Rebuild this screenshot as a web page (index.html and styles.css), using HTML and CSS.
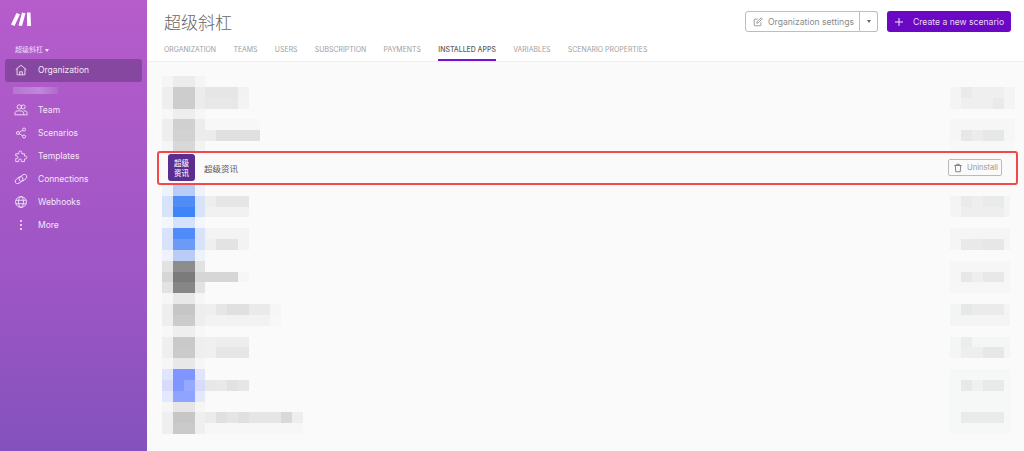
FILE: index.html
```html
<!DOCTYPE html>
<html lang="zh-CN">
<head>
<meta charset="utf-8">
<title>超级斜杠</title>
<link rel="stylesheet" href="styles.css">
</head>
<body>
<div class="app">
  <aside class="sidebar">
    <svg class="logo" viewBox="0 0 20 14"><path d="M0 12.500 5.500 1 9 2.200 3.500 14z M7.500 13.500 11 .5l3.500.7L11 14z M16 .5h3.500L20 14h-4z" fill="#fff"/></svg>
    <div class="org-label">超级斜杠 <span class="caret"></span></div>
    <nav class="nav">
      <a class="nav-item active"><svg class="nav-icon" viewBox="0 0 16 16"><path d="M2 7.500 8 2.500l6 5M3.500 6.500v7h9v-7M6.500 13.500v-3.500h3v3.500"/></svg><span>Organization</span></a>
      <div class="nav-blur"></div>
      <a class="nav-item"><svg class="nav-icon" viewBox="0 0 16 16"><circle cx="6" cy="4.500" r="2.500"/><circle cx="10.500" cy="4.500" r="2.300"/><path d="M1 13.500c0-1.500 0-4.500 3-4.500h4c3 0 3 3 3 4.500zM11 9h1.500c2.500 0 2.500 2.500 2.500 4.500h-4"/></svg><span>Team</span></a>
      <a class="nav-item"><svg class="nav-icon" viewBox="0 0 16 16"><circle cx="4.500" cy="8" r="1.700"/><circle cx="11.500" cy="4" r="1.700"/><circle cx="11.500" cy="12" r="1.700"/><path d="M6 7.200 10 4.800M6 8.800l4 2.400"/></svg><span>Scenarios</span></a>
      <a class="nav-item"><svg class="nav-icon" viewBox="0 0 16 16"><path d="M2 5.500h3.500V4a1.700 1.700 0 0 1 3.400 0v1.500h3V8h1a1.700 1.700 0 0 1 0 3.400h-1v3H8.500v-1.500a1.500 1.500 0 0 0-3 0v1.500H2v-3.400h1a1.500 1.500 0 0 0 0-3H2z"/></svg><span>Templates</span></a>
      <a class="nav-item"><svg class="nav-icon wide" viewBox="0 0 16 16"><ellipse class="link-a" cx="5.800" cy="9.300" rx="5" ry="3"/><ellipse class="link-b" cx="10.200" cy="6.700" rx="5" ry="3"/></svg><span>Connections</span></a>
      <a class="nav-item"><svg class="nav-icon" viewBox="0 0 16 16"><circle cx="8" cy="8" r="6.200"/><ellipse cx="8" cy="8" rx="2.800" ry="6.200"/><path d="M2 6h12M2 10h12"/></svg><span>Webhooks</span></a>
      <a class="nav-item"><svg class="nav-icon" viewBox="0 0 16 16"><circle class="dot" cx="8" cy="3.500" r="1.200"/><circle class="dot" cx="8" cy="8" r="1.200"/><circle class="dot" cx="8" cy="12.500" r="1.200"/></svg><span>More</span></a>
    </nav>
  </aside>
  <main class="main">
    <header class="header">
      <div class="header-top">
        <h1 class="title">超级斜杠</h1>
        <div class="actions">
          <div class="split">
            <button class="btn-settings"><svg class="btn-icon" viewBox="0 0 12 12"><path d="M9.500 6.500v3a1 1 0 0 1-1 1h-6a1 1 0 0 1-1-1v-6a1 1 0 0 1 1-1h3M4.500 7.500l.4-2L10 .9l1.200 1.200L6.400 7z"/></svg>Organization settings</button>
            <button class="btn-caret"><span class="caret dark"></span></button>
          </div>
          <button class="btn-primary"><svg class="plus" viewBox="0 0 8 8"><path d="M4 0v8M0 4h8"/></svg>Create a new scenario</button>
        </div>
      </div>
      <nav class="tabs">
        <a class="tab">Organization</a>
        <a class="tab">Teams</a>
        <a class="tab">Users</a>
        <a class="tab">Subscription</a>
        <a class="tab">Payments</a>
        <a class="tab active">Installed apps</a>
        <a class="tab">Variables</a>
        <a class="tab">Scenario properties</a>
      </nav>
    </header>
    <section class="content">
      <div class="mosaic-row top">
        <svg class="mosaic-left top-h" viewBox="0 0 13 7" shape-rendering="crispEdges">
          <rect y="0" width="1" height="1" fill="#f5f5f5"/><rect x="1" y="0" width="2" height="1" fill="#ececec"/><rect x="3" y="0" width="1" height="1" fill="#f5f5f5"/>
          <rect y="1" width="1" height="1" fill="#eee"/><rect x="1" y="1" width="2" height="2" fill="#cdcdcd"/><rect x="3" y="1" width="1" height="2" fill="#ececec"/><rect y="2" width="1" height="1" fill="#eee"/>
          <rect x="4" y="1" width="3" height="1" fill="#e6e6e6"/><rect x="7" y="1" width="1" height="1" fill="#f2f2f2"/><rect x="4" y="2" width="3" height="1" fill="#e8e8e8"/><rect x="7" y="2" width="1" height="1" fill="#f3f3f3"/>
          <rect y="3" width="1" height="1" fill="#f7f7f7"/><rect x="1" y="3" width="2" height="1" fill="#eee"/><rect x="3" y="3" width="1" height="1" fill="#f6f6f6"/>
          <rect y="4" width="1" height="2" fill="#eee"/><rect x="1" y="4" width="2" height="1" fill="#d0d0d0"/><rect x="3" y="4" width="1" height="2" fill="#ececec"/><rect x="4" y="4" width="5" height="1" fill="#f7f7f7"/>
          <rect x="1" y="5" width="2" height="1" fill="#d2d2d2"/><rect x="4" y="5" width="1" height="1" fill="#ececec"/><rect x="5" y="5" width="4" height="1" fill="#e0e0e0"/>
          <rect y="6" width="1" height="1" fill="#f5f5f5"/><rect x="1" y="6" width="2" height="1" fill="#d8d8d8"/><rect x="3" y="6" width="1" height="1" fill="#f3f3f3"/>
        </svg>
        <svg class="mosaic-right top-h" viewBox="0 0 6 7" shape-rendering="crispEdges">
          <rect y="1" width="6" height="2" fill="#f4f4f4"/><rect x="1" y="1" width="4" height="2" fill="#efefef"/><rect x="1" y="1" width="1" height="1" fill="#e9eaea"/><rect x="4" y="2" width="1" height="1" fill="#e9eaea"/>
          <rect y="4" width="6" height="2" fill="#f6f6f6"/><rect x="1" y="5" width="4" height="1" fill="#ececec"/><rect x="1" y="5" width="1" height="1" fill="#e6e7e7"/><rect x="3" y="5" width="2" height="1" fill="#e6e7e7"/>
          <rect y="6" width="6" height="1" fill="#f8f8f8"/>
        </svg>
      </div>
      <div class="app-row">
        <div class="app-icon">超级<br>资讯</div>
        <div class="app-name">超级资讯</div>
        <button class="btn-uninstall"><svg class="trash" viewBox="0 0 12 12"><path d="M1.500 3h9M4.500 3V1.500h3V3M2.800 3l.5 7.500h5.400L9.200 3"/></svg>Uninstall</button>
      </div>
      <div class="mosaic-row">
        <svg class="mosaic-left bottom-h" viewBox="0 0 13 23" shape-rendering="crispEdges">
          <rect y="0" width="4" height="1" fill="#eef2fb"/><rect x="1" y="0" width="2" height="1" fill="#b8ccf5"/>
          <rect y="1" width="4" height="2" fill="#d8e2f8"/><rect x="1" y="1" width="2" height="1" fill="#4f8cf7"/><rect x="1" y="2" width="2" height="1" fill="#3f85f7"/>
          <rect x="4" y="1" width="1" height="1" fill="#eee"/><rect x="5" y="1" width="3" height="1" fill="#e6e6e6"/><rect x="4" y="2" width="4" height="1" fill="#f1f1f1"/>
          <rect y="3" width="4" height="1" fill="#f3f6fd"/><rect x="1" y="3" width="2" height="1" fill="#d6e2fb"/>
          <rect y="4" width="4" height="2" fill="#d8e2f8"/><rect x="1" y="4" width="2" height="1" fill="#4f8cf7"/><rect x="1" y="5" width="2" height="1" fill="#6b9bf7"/>
          <rect x="4" y="4" width="4" height="1" fill="#f3f3f3"/><rect x="4" y="5" width="1" height="1" fill="#efefef"/><rect x="5" y="5" width="2" height="1" fill="#e3e3e3"/><rect x="7" y="5" width="1" height="1" fill="#f3f3f3"/>
          <rect y="6" width="4" height="1" fill="#eef2fb"/><rect x="1" y="6" width="2" height="1" fill="#b8ccf5"/>
          <rect y="7" width="4" height="1" fill="#e2e2e2"/><rect x="1" y="7" width="2" height="1" fill="#8d8d8d"/>
          <rect y="8" width="4" height="1" fill="#d6d6d6"/><rect x="1" y="8" width="2" height="1" fill="#7b7b7b"/><rect x="4" y="8" width="3" height="1" fill="#d6d6d6"/><rect x="7" y="8" width="1" height="1" fill="#f6f6f6"/>
          <rect y="9" width="4" height="1" fill="#e3e3e3"/><rect x="1" y="9" width="2" height="1" fill="#868686"/>
          <rect y="10" width="4" height="1" fill="#f6f6f6"/><rect x="1" y="10" width="2" height="1" fill="#e8e8e8"/>
          <rect y="11" width="4" height="2" fill="#eee"/><rect x="1" y="11" width="2" height="1" fill="#c6c6c6"/><rect x="1" y="12" width="2" height="1" fill="#cbcbcb"/>
          <rect x="4" y="11" width="1" height="1" fill="#efefef"/><rect x="5" y="11" width="1" height="1" fill="#e6e6e6"/><rect x="6" y="11" width="2" height="1" fill="#e0e0e0"/><rect x="8" y="11" width="2" height="1" fill="#eaeaea"/><rect x="10" y="11" width="1" height="1" fill="#f6f6f6"/>
          <rect x="4" y="12" width="6" height="1" fill="#f2f2f2"/><rect x="10" y="12" width="1" height="1" fill="#f7f7f7"/>
          <rect y="13" width="4" height="1" fill="#f7f7f7"/><rect x="1" y="13" width="2" height="1" fill="#eee"/>
          <rect y="14" width="4" height="2" fill="#efefef"/><rect x="1" y="14" width="2" height="1" fill="#c9c9c9"/><rect x="1" y="15" width="2" height="1" fill="#cbcbcb"/>
          <rect x="4" y="14" width="1" height="2" fill="#f0f0f0"/><rect x="5" y="14" width="3" height="1" fill="#ededed"/><rect x="5" y="15" width="3" height="1" fill="#e6e6e6"/>
          <rect y="16" width="4" height="1" fill="#f6f6f6"/><rect x="1" y="16" width="2" height="1" fill="#e8e8e8"/>
          <rect y="17" width="4" height="1" fill="#e0e4fc"/><rect x="1" y="17" width="2" height="1" fill="#7f95ff"/>
          <rect y="18" width="4" height="1" fill="#d8dcfa"/><rect x="1" y="18" width="1" height="1" fill="#7f95ff"/><rect x="2" y="18" width="1" height="1" fill="#97a8ff"/>
          <rect x="4" y="18" width="1" height="1" fill="#e8e8e8"/><rect x="5" y="18" width="1" height="1" fill="#e9e9e9"/><rect x="6" y="18" width="1" height="1" fill="#e2e2e2"/><rect x="7" y="18" width="1" height="1" fill="#e6e6e6"/>
          <rect y="19" width="4" height="1" fill="#e4e8fc"/><rect x="1" y="19" width="2" height="1" fill="#8fa4ff"/>
          <rect y="20" width="4" height="1" fill="#f6f6f6"/><rect x="1" y="20" width="2" height="1" fill="#e6e6e6"/>
          <rect y="21" width="4" height="2" fill="#efefef"/><rect x="1" y="21" width="2" height="1" fill="#c6c6c6"/><rect x="1" y="22" width="2" height="1" fill="#cacaca"/>
          <rect x="4" y="21" width="1" height="1" fill="#ebebeb"/><rect x="5" y="21" width="1" height="1" fill="#e0e0e0"/><rect x="6" y="21" width="1" height="1" fill="#e5e5e5"/><rect x="7" y="21" width="1" height="1" fill="#e0e0e0"/><rect x="8" y="21" width="3" height="1" fill="#e6e6e6"/><rect x="11" y="21" width="1" height="1" fill="#d9d9d9"/><rect x="12" y="21" width="1" height="1" fill="#eee"/>
          <rect x="4" y="22" width="9" height="1" fill="#f7f7f7"/>
        </svg>
        <svg class="mosaic-right bottom-h" viewBox="0 0 6 23" shape-rendering="crispEdges">
          <rect y="1" width="5.500" height="2" fill="#f4f4f4"/><rect x="1" y="1" width="4" height="2" fill="#eeeeee"/><rect x="1" y="1" width="1" height="1" fill="#e9eaea"/><rect x="3" y="1" width="2" height="1" fill="#e9eaea"/>
          <rect y="4" width="5.500" height="2" fill="#f5f5f5"/><rect x="1" y="5" width="4" height="1" fill="#e9e9e9"/><rect x="3" y="5" width="2" height="1" fill="#e6e7e7"/>
          <rect y="7" width="5.500" height="3" fill="#f6f6f6"/><rect x="1" y="8" width="1" height="1" fill="#e6e7e7"/><rect x="2" y="8" width="1" height="1" fill="#eeeeee"/><rect x="3" y="8" width="2" height="1" fill="#e8e8e8"/>
          <rect y="11" width="5.500" height="2" fill="#f3f4f4"/><rect x="1" y="11" width="1" height="1" fill="#e6e7e8"/><rect x="2" y="11" width="3" height="1" fill="#ebebec"/>
          <rect y="14" width="5.500" height="2" fill="#f4f5f5"/><rect x="1" y="14" width="1" height="1" fill="#ebecec"/><rect x="1" y="15" width="2" height="1" fill="#eeeeee"/><rect x="3" y="15" width="2" height="1" fill="#e6e7e9"/>
          <rect y="17" width="5.500" height="6" fill="#f6f7f7"/><rect x="1" y="18" width="1" height="1" fill="#e7e8ea"/><rect x="2" y="18" width="1" height="1" fill="#f0f0f0"/><rect x="3" y="18" width="2" height="1" fill="#e9e9e9"/><rect x="1" y="21" width="4" height="1" fill="#e9eaea"/>
        </svg>
      </div>
    </section>
  </main>
</div>
</body>
</html>
```
FILE: styles.css
```css
* { box-sizing: border-box; }
html, body { margin: 0; height: 100%; overflow: hidden; }
body { font-family: Inter, "Noto Sans CJK SC", sans-serif; background: #fafafa; }
button { font-family: inherit; cursor: pointer; }

.app { display: flex; height: 451px; }

.sidebar {
  width: 147px;
  flex: none;
  padding: 12px 5px 0;
  background: linear-gradient(180deg, #b65ccb 0%, #9c55c5 66%, #8352bc 100%);
  color: #f5e6fa;
}
.logo { display: block; width: 20px; height: 14px; margin-left: 6px; }
.org-label {
  margin: 18px 0 0 10px;
  height: 11px;
  line-height: 11px;
  font-size: 7px;
  font-family: "Noto Sans CJK SC", sans-serif;
  color: #f0dff6;
}
.caret {
  display: inline-block;
  vertical-align: middle;
  width: 0;
  height: 0;
  border-left: 2.500px solid transparent;
  border-right: 2.500px solid transparent;
  border-top: 3px solid #f3e6f8;
}
.caret.dark { border-top-color: #666; }

.nav { display: flex; flex-direction: column; margin-top: 4px; }
.nav-item {
  display: flex;
  align-items: center;
  height: 23px;
  padding: 0 0 1px 9px;
  border-radius: 3px;
  font-size: 8.500px;
}
.nav-item.active { background: #8647a0; }
.nav-icon {
  width: 14px;
  height: 14px;
  margin-right: 10px;
  fill: none;
  stroke: #f3e6f8;
  stroke-width: 1;
}
.nav-icon .dot { fill: #f3e6f8; stroke: none; }
.link-a { transform: rotate(-35deg); transform-origin: 5.800px 9.300px; }
.link-b { transform: rotate(-35deg); transform-origin: 10.200px 6.700px; }
.nav-blur {
  height: 7px;
  width: 45px;
  margin: 5px 0 5px 8px;
  background: linear-gradient(90deg, #b478cf, #bf88d8 60%, #ab6cc9);
  filter: blur(.6px);
}

.main { flex: 1; min-width: 0; display: flex; flex-direction: column; }

.header { height: 62px; background: #fff; border-bottom: 1px solid #efefef; padding: 0 13px 0 17px; }
.header-top { display: flex; justify-content: space-between; align-items: flex-start; height: 43px; }
.title {
  margin: 9px 0 0;
  font-family: "Noto Sans CJK SC", sans-serif;
  font-size: 17px;
  line-height: 25px;
  font-weight: 300;
  color: #666;
}
.actions { display: flex; gap: 9px; margin-top: 11px; }
.split { display: flex; height: 21px; }
.btn-settings, .btn-caret {
  height: 21px;
  padding: 0;
  background: #fff;
  border: 1px solid #b9bec2;
  color: #8a8a8a;
  font-size: 8.600px;
  display: flex;
  align-items: center;
}
.btn-settings { width: 115px; padding-left: 7px; border-radius: 3px 0 0 3px; }
.btn-caret { width: 18px; justify-content: center; border-left: 0; border-radius: 0 3px 3px 0; }
.btn-icon { width: 10px; height: 10px; margin-right: 5px; fill: none; stroke: #8a8a8a; stroke-width: 1; }
.btn-primary {
  width: 124px;
  height: 21px;
  padding: 0 0 0 8px;
  border: 0;
  border-radius: 3px;
  background: #6a08c4;
  color: #e9d8f8;
  font-size: 8.600px;
  display: flex;
  align-items: center;
}
.plus { width: 8px; height: 8px; margin-right: 10px; stroke: #f0e6fa; stroke-width: 1; fill: none; }

.tabs { display: flex; gap: 17.300px; height: 18px; }
.tab {
  height: 18px;
  padding-top: 2px;
  line-height: 9px;
  font-size: 6.950px;
  text-transform: uppercase;
  color: #a0a0a0;
  white-space: nowrap;
}
.tab.active { color: #606060; font-weight: 500; border-bottom: 2px solid #7a10d8; }

.content { flex: 1; padding-top: 14px; }
.mosaic-row { display: flex; justify-content: space-between; align-items: flex-start; padding: 0 9px 0 15px; }
.mosaic-row.top { height: 75px; overflow: hidden; }
.mosaic-left, .mosaic-right { display: block; filter: blur(.5px); }
.mosaic-left { width: 141px; }
.mosaic-right { width: 65px; }
.top-h { height: 76px; }
.bottom-h { height: 249px; }

.app-row {
  display: flex;
  align-items: center;
  height: 34px;
  margin: 0 6px 0 10px;
  padding: 0 14px 1px 9px;
  border: 2px solid #f4474a;
  border-radius: 3px;
  background: #fafafa;
}
.app-icon {
  width: 27px;
  height: 27px;
  flex: none;
  border-radius: 3px;
  background: #5a2d91;
  color: #f0e9f7;
  font-family: "Noto Sans CJK SC", serif;
  font-weight: 500;
  font-size: 7.500px;
  line-height: 9.500px;
  text-align: center;
  padding-top: 4px;
}
.app-name {
  flex: 1;
  margin-left: 9px;
  font-family: "Noto Sans CJK SC", sans-serif;
  font-size: 8.500px;
  color: #555;
}
.btn-uninstall {
  width: 54px;
  height: 17px;
  padding: 0 0 0 4px;
  border: 1px solid #b5bcc0;
  border-radius: 2px;
  background: #fafafa;
  color: #999;
  font-size: 7.600px;
  display: flex;
  align-items: center;
}
.trash { width: 10px; height: 10px; margin-right: 4px; fill: none; stroke: #707070; stroke-width: 1; }
```
